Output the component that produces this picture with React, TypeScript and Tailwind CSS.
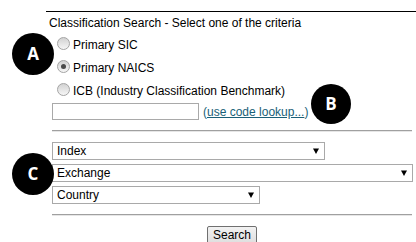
import React from "react";

const radios = [
  { label: "Primary SIC", checked: false },
  { label: "Primary NAICS", checked: true },
  { label: "ICB (Industry Classification Benchmark)", checked: false },
];

const selects = [
  { label: "Index", w: "w-[273px]" },
  { label: "Exchange", w: "w-[361px]" },
  { label: "Country", w: "w-[208px]" },
];

function Radio({ checked }: { checked: boolean }) {
  return (
    <span className="ml-[5px] mr-[3px] mb-[3px] flex h-[13px] w-[13px] shrink-0 items-center justify-center rounded-full border border-[#a4a4a4] bg-[linear-gradient(to_bottom,#d2d2d2,#f6f6f6)]">
      {checked && <span className="h-[5px] w-[5px] rounded-full bg-[#4a4a4a]" />}
    </span>
  );
}

function Badge({ letter, pos }: { letter: string; pos: string }) {
  return (
    <div
      className={`absolute ${pos} flex items-center justify-center rounded-full bg-black font-['Open_Sans',sans-serif] text-[17px] font-bold text-white`}
    >
      {letter}
    </div>
  );
}

export default function App() {
  return (
    <div className="relative h-[242px] w-[416px] overflow-hidden bg-white font-['Liberation_Sans',Arial,sans-serif] text-[12px] leading-[14px] text-black">
      <div className="ml-[46px] mt-[11px] border-t border-black pl-[6px] pr-[4px]">
        <div className="-ml-[3px] pt-[4px]">Classification Search - Select one of the criteria</div>

        {/* radio list */}
        <div className="mt-[3px]">
          {radios.map((r) => (
            <div key={r.label} className="flex h-[23px] items-center">
              <Radio checked={r.checked} />
              <span>{r.label}</span>
            </div>
          ))}
        </div>

        <div className="mt-[1px] flex items-center">
          <div className="h-[17px] w-[147px] border border-[#a9a9a9] bg-white" />
          <span className="ml-[4px] text-[#1a5f78]">
            (<span className="underline">use code lookup...</span>)
          </span>
        </div>

        <div className="mt-[10px] border-t border-b border-t-[#a0a0a0] border-b-[#e6e6e6]" />

        <div className="mt-[10px] flex flex-col gap-[4px]">
          {selects.map((s) => (
            <div
              key={s.label}
              className={`flex h-[18px] ${s.w} items-center justify-between border border-[#a9a9a9] bg-white pl-[4px] pr-[5px]`}
            >
              <span>{s.label}</span>
              <svg width="6" height="6" viewBox="0 0 6 6">
                <path d="M0 0.5h6L3 6z" fill="#000" />
              </svg>
            </div>
          ))}
        </div>

        <div className="mt-[10px] border-t border-b border-t-[#a0a0a0] border-b-[#e6e6e6]" />

        <div className="mt-[10px] flex justify-center">
          <button className="flex h-[20px] w-[50px] justify-center rounded-[2px] border border-[#707070] bg-[linear-gradient(to_bottom,#f2f2f2,#dcdcdc)] pt-[1px] text-[12px] leading-[14px] text-black">
            Search
          </button>
        </div>
      </div>

      <Badge letter="A" pos="left-[12px] top-[33px] h-[42px] w-[42px]" />
      <Badge letter="B" pos="left-[311px] top-[84px] h-[40px] w-[40px]" />
      <Badge letter="C" pos="left-[12px] top-[153px] h-[42px] w-[42px]" />
    </div>
  );
}
